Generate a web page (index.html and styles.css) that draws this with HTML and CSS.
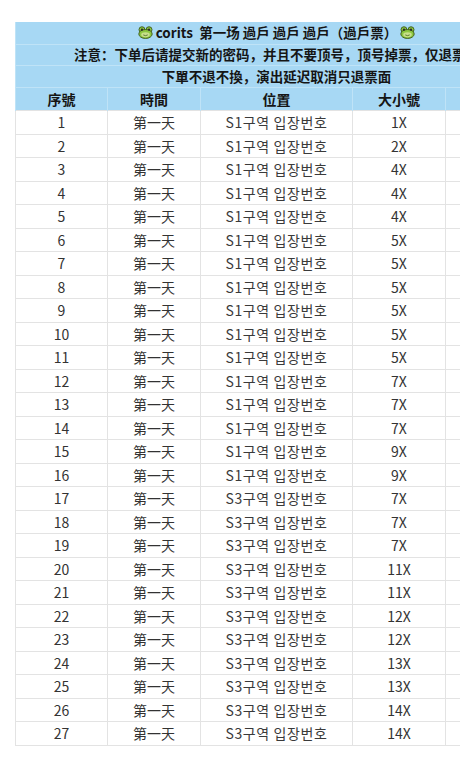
FILE: index.html
```html
<!DOCTYPE html>
<html lang="zh">
<head>
<meta charset="utf-8">
<title>corits 過戶</title>
<link rel="stylesheet" href="styles.css">
</head>
<body>
<div class="sheet">
<table class="grid">
  <colgroup>
    <col class="c1"><col class="c2"><col class="c3"><col class="c4"><col class="c5">
  </colgroup>
  <thead>
    <tr class="band band-title">
      <th colspan="5"><span class="title"><svg class="frog" viewBox="0 0 16 14" aria-hidden="true"><circle cx="4.2" cy="4" r="3.2" fill="#8cc63f" stroke="#3d5a1a" stroke-width="1"/><circle cx="11.8" cy="4" r="3.2" fill="#8cc63f" stroke="#3d5a1a" stroke-width="1"/><ellipse cx="8" cy="8.6" rx="7.2" ry="4.8" fill="#8cc63f" stroke="#3d5a1a" stroke-width="1"/><circle cx="4.2" cy="4" r="1.2" fill="#2b2b2b"/><circle cx="11.8" cy="4" r="1.2" fill="#2b2b2b"/><ellipse cx="8" cy="9.4" rx="4.6" ry="2.6" fill="#c8e08a"/><path d="M5.6 9.6 Q8 11.2 10.4 9.6" fill="none" stroke="#3d5a1a" stroke-width="0.8"/></svg> corits&nbsp; 第一场 過戶 過戶 過戶（過戶票） <svg class="frog" viewBox="0 0 16 14" aria-hidden="true"><circle cx="4.2" cy="4" r="3.2" fill="#8cc63f" stroke="#3d5a1a" stroke-width="1"/><circle cx="11.8" cy="4" r="3.2" fill="#8cc63f" stroke="#3d5a1a" stroke-width="1"/><ellipse cx="8" cy="8.6" rx="7.2" ry="4.8" fill="#8cc63f" stroke="#3d5a1a" stroke-width="1"/><circle cx="4.2" cy="4" r="1.2" fill="#2b2b2b"/><circle cx="11.8" cy="4" r="1.2" fill="#2b2b2b"/><ellipse cx="8" cy="9.4" rx="4.6" ry="2.6" fill="#c8e08a"/><path d="M5.6 9.6 Q8 11.2 10.4 9.6" fill="none" stroke="#3d5a1a" stroke-width="0.8"/></svg></span></th>
    </tr>
    <tr class="band band-note">
      <th colspan="5">注意：下单后请提交新的密码，并且不要顶号，顶号掉票，仅退票面</th>
    </tr>
    <tr class="band band-rule">
      <th colspan="5">下單不退不換，演出延迟取消只退票面</th>
    </tr>
    <tr class="band band-cols">
      <th>序號</th><th>時間</th><th>位置</th><th>大小號</th><th></th>
    </tr>
  </thead>
  <tbody>
    <tr><td>1</td><td>第一天</td><td class="ko">S1구역 입장번호</td><td>1X</td><td></td></tr>
    <tr><td>2</td><td>第一天</td><td class="ko">S1구역 입장번호</td><td>2X</td><td></td></tr>
    <tr><td>3</td><td>第一天</td><td class="ko">S1구역 입장번호</td><td>4X</td><td></td></tr>
    <tr><td>4</td><td>第一天</td><td class="ko">S1구역 입장번호</td><td>4X</td><td></td></tr>
    <tr><td>5</td><td>第一天</td><td class="ko">S1구역 입장번호</td><td>4X</td><td></td></tr>
    <tr><td>6</td><td>第一天</td><td class="ko">S1구역 입장번호</td><td>5X</td><td></td></tr>
    <tr><td>7</td><td>第一天</td><td class="ko">S1구역 입장번호</td><td>5X</td><td></td></tr>
    <tr><td>8</td><td>第一天</td><td class="ko">S1구역 입장번호</td><td>5X</td><td></td></tr>
    <tr><td>9</td><td>第一天</td><td class="ko">S1구역 입장번호</td><td>5X</td><td></td></tr>
    <tr><td>10</td><td>第一天</td><td class="ko">S1구역 입장번호</td><td>5X</td><td></td></tr>
    <tr><td>11</td><td>第一天</td><td class="ko">S1구역 입장번호</td><td>5X</td><td></td></tr>
    <tr><td>12</td><td>第一天</td><td class="ko">S1구역 입장번호</td><td>7X</td><td></td></tr>
    <tr><td>13</td><td>第一天</td><td class="ko">S1구역 입장번호</td><td>7X</td><td></td></tr>
    <tr><td>14</td><td>第一天</td><td class="ko">S1구역 입장번호</td><td>7X</td><td></td></tr>
    <tr><td>15</td><td>第一天</td><td class="ko">S1구역 입장번호</td><td>9X</td><td></td></tr>
    <tr><td>16</td><td>第一天</td><td class="ko">S1구역 입장번호</td><td>9X</td><td></td></tr>
    <tr><td>17</td><td>第一天</td><td class="ko">S3구역 입장번호</td><td>7X</td><td></td></tr>
    <tr><td>18</td><td>第一天</td><td class="ko">S3구역 입장번호</td><td>7X</td><td></td></tr>
    <tr><td>19</td><td>第一天</td><td class="ko">S3구역 입장번호</td><td>7X</td><td></td></tr>
    <tr><td>20</td><td>第一天</td><td class="ko">S3구역 입장번호</td><td>11X</td><td></td></tr>
    <tr><td>21</td><td>第一天</td><td class="ko">S3구역 입장번호</td><td>11X</td><td></td></tr>
    <tr><td>22</td><td>第一天</td><td class="ko">S3구역 입장번호</td><td>12X</td><td></td></tr>
    <tr><td>23</td><td>第一天</td><td class="ko">S3구역 입장번호</td><td>12X</td><td></td></tr>
    <tr><td>24</td><td>第一天</td><td class="ko">S3구역 입장번호</td><td>13X</td><td></td></tr>
    <tr><td>25</td><td>第一天</td><td class="ko">S3구역 입장번호</td><td>13X</td><td></td></tr>
    <tr><td>26</td><td>第一天</td><td class="ko">S3구역 입장번호</td><td>14X</td><td></td></tr>
    <tr><td>27</td><td>第一天</td><td class="ko">S3구역 입장번호</td><td>14X</td><td></td></tr>
  </tbody>
</table>
</div>
</body>
</html>
```

FILE: styles.css
```css
html, body {
  margin: 0;
  padding: 0;
  background: #ffffff;
}

body {
  width: 460px;
  height: 759px;
  overflow: hidden;
  font-family: "Noto Sans CJK SC", "Noto Sans", sans-serif;
  color: #333333;
}

.sheet {
  padding: 22px 0 0 15px;
}

.grid {
  border-collapse: collapse;
  table-layout: fixed;
  width: 522px;
}

.c1 { width: 92px; }
.c2 { width: 93px; }
.c3 { width: 152px; }
.c4 { width: 93px; }
.c5 { width: 92px; }

.band th {
  background: #a7d8f4;
  color: #151515;
  font-weight: 700;
  font-size: 13.5px;
  line-height: 1;
  padding: 0;
  text-align: center;
  white-space: nowrap;
  border: 1px solid #bfe3f7;
  border-top-color: #b9e0f6;
}

.band-title th { height: 22px; border-top: 0; }
.band-note th { height: 20px; }
.band-rule th { height: 21px; }
.band-cols th { height: 22px; font-size: 14px; border-bottom: 0; }

.title {
  display: inline-flex;
  align-items: center;
}

.frog {
  width: 15px;
  height: 13px;
  margin: 0 3px;
}

.grid td {
  height: 22.5px;
  padding: 0;
  font-size: 14px;
  line-height: 1;
  text-align: center;
  color: #333333;
  border: 1px solid #e3e3e3;
  white-space: nowrap;
}

.grid td.ko {
  font-family: "Noto Sans CJK KR", "Noto Sans CJK SC", sans-serif;
  color: #3a3a3a;
  letter-spacing: 0.6px;
}
```
